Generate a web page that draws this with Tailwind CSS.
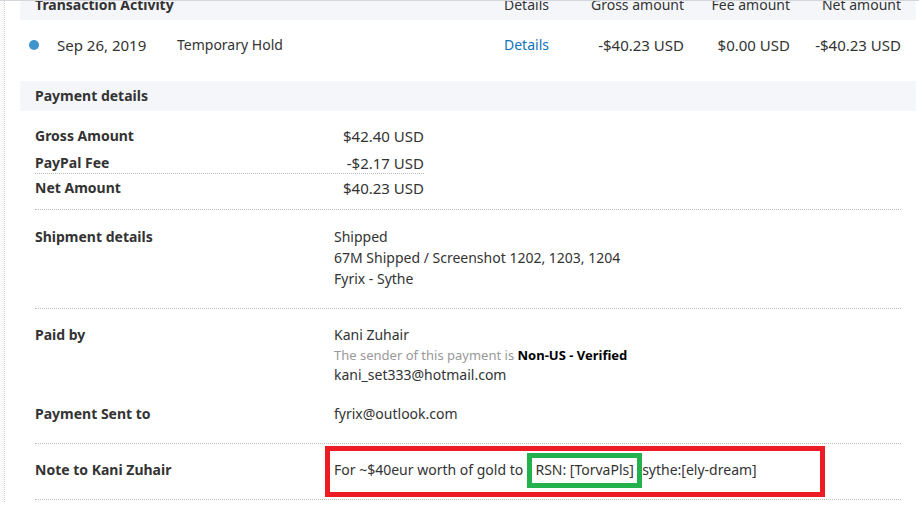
<!DOCTYPE html>
<html lang="en">
<head>
<meta charset="utf-8">
<meta name="viewport" content="width=device-width, initial-scale=1">
<title>Transaction details</title>
<script src="https://cdn.jsdelivr.net/npm/@tailwindcss/browser@4"></script>
</head>
<body class="bg-white font-['Noto_Sans',sans-serif] text-sm leading-5 text-[#333]">
<div class="overflow-hidden border-t border-[#d5d6db]">
<div class="flex">
  <div class="w-1 shrink-0 bg-[#fafafa]"></div>
  <main class="min-w-0 grow border-l border-dotted border-[#ccc] pl-[15px] pr-[3px] pb-0.5">

    <!-- Activity table, scrolled partly under the top edge -->
    <table class="-mt-[11px] w-full table-fixed">
      <thead class="h-[30px] bg-[#f5f6fa]">
        <tr>
          <th colspan="2" class="pl-[15px] text-left font-bold">Transaction Activity</th>
          <th class="w-[80px] text-left font-normal">Details</th>
          <th class="w-[100px] text-right font-normal">Gross amount</th>
          <th class="w-[106px] text-right font-normal">Fee amount</th>
          <th class="w-[126px] pr-[15px] text-right font-normal">Net amount</th>
        </tr>
      </thead>
      <tbody>
        <tr class="h-[61px] align-top">
          <td colspan="2" class="pt-[15px] pl-[9px]">
            <div class="flex items-center">
              <span class="mr-[18px] size-[10px] rounded-full bg-[#4094cc]"></span>
              <span class="w-[120px] text-[15px]">Sep 26, 2019</span>
              <span>Temporary Hold</span>
            </div>
          </td>
          <td class="pt-[15px]"><a href="#" class="text-[#1072ba]">Details</a></td>
          <td class="pt-[15px] text-right text-[15px]">-$40.23 USD</td>
          <td class="pt-[15px] text-right text-[15px] whitespace-nowrap">$0.00 USD</td>
          <td class="pt-[15px] pr-[15px] text-right text-[15px]">-$40.23 USD</td>
        </tr>
      </tbody>
    </table>

    <h2 class="bg-[#f5f6fa] py-[5px] pl-[15px] font-bold">Payment details</h2>

    <div class="px-[15px]">
      <section class="border-b border-dotted border-[#bbb] pt-[15px] pb-[11px]">
        <dl class="w-[389px]">
          <div class="flex justify-between pb-[7px]"><dt class="font-bold">Gross Amount</dt><dd class="text-[15px]">$42.40 USD</dd></div>
          <div class="flex justify-between border-b border-dotted border-[#bbb]"><dt class="font-bold">PayPal Fee</dt><dd class="text-[15px]">-$2.17 USD</dd></div>
          <div class="flex justify-between pt-1"><dt class="font-bold">Net Amount</dt><dd class="text-[15px]">$40.23 USD</dd></div>
        </dl>
      </section>

      <section class="flex border-b border-dotted border-[#bbb] pt-4 pb-[19px] leading-[21px]">
        <h3 class="w-[299px] shrink-0 font-bold">Shipment details</h3>
        <div>
          <p>Shipped</p>
          <p>67M Shipped / Screenshot 1202, 1203, 1204</p>
          <p>Fyrix - Sythe</p>
        </div>
      </section>

      <section class="border-b border-dotted border-[#bbb] pt-4 pb-[19px]">
        <div class="flex">
          <h3 class="w-[299px] shrink-0 font-bold">Paid by</h3>
          <div>
            <p>Kani Zuhair</p>
            <p class="text-[13px] text-[#999]">The sender of this payment is <strong class="font-bold text-black">Non-US - Verified</strong></p>
            <p>kani_set333@hotmail.com</p>
          </div>
        </div>
        <div class="flex pt-[19px]">
          <h3 class="w-[299px] shrink-0 font-bold">Payment Sent to</h3>
          <p>fyrix@outlook.com</p>
        </div>
      </section>

      <section class="relative flex border-b border-dotted border-[#bbb] pt-4 pb-[19px]">
        <h3 class="w-[299px] shrink-0 font-bold">Note to Kani Zuhair</h3>
        <p class="flex items-center">
          <span class="mr-1">For ~$40eur worth of gold to</span>
          <span class="-my-2 flex h-[35px] w-[115px] items-center justify-center border-5 border-[#22b14c] whitespace-nowrap">RSN: [TorvaPls]</span>
          <span>sythe:[ely-dream]</span>
        </p>
        <!-- Highlight frame drawn over the note -->
        <div class="absolute top-0.5 left-[290px] h-[51px] w-[500px] border-5 border-[#ed1c24]"></div>
      </section>
    </div>
  </main>
</div>
</div>
</body>
</html>
